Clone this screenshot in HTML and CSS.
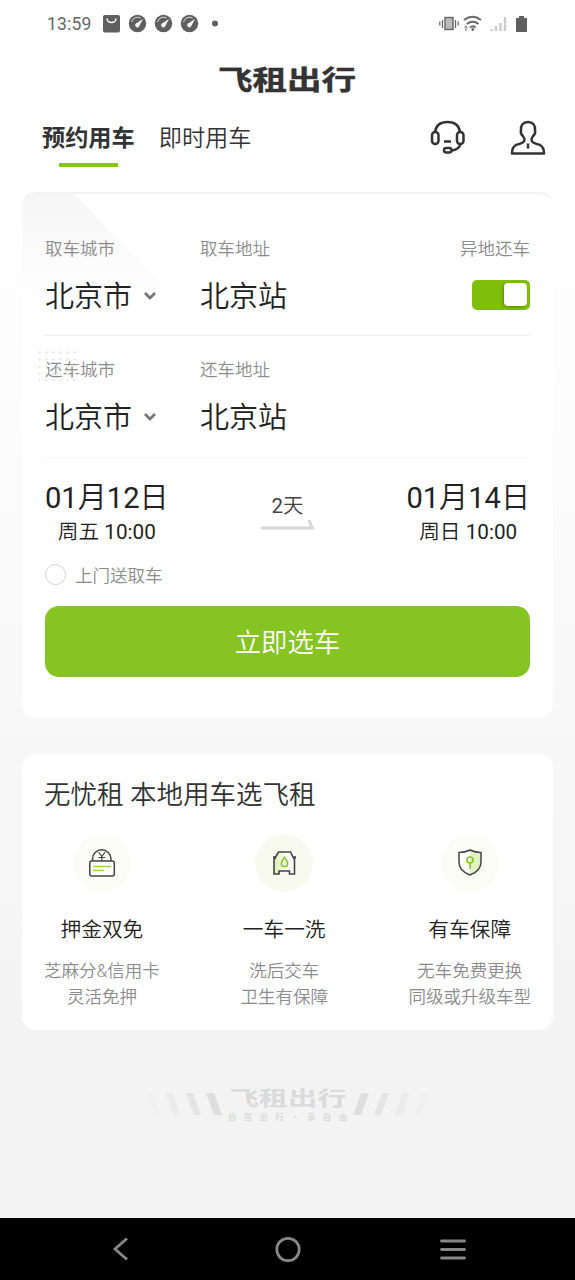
FILE: index.html
```html
<!DOCTYPE html>
<html lang="zh-CN">
<head>
<meta charset="utf-8">
<title>飞租出行</title>
<link rel="stylesheet" href="styles.css">
</head>
<body>
<div class="screen">
  <header class="status">
    <span class="clock">13:59</span>
    <svg class="status-left" width="120" height="20" viewBox="0 0 120 20">
      <rect x="0" y="1" width="17" height="17.500" rx="2" fill="#5f5f5f"/>
      <path d="M4 4.500a4.500 4 0 0 0 9 0" fill="none" stroke="#fff" stroke-width="1.500"/>
      <g id="gauge"><circle cx="34.500" cy="9.500" r="8.700" fill="#5f5f5f"/><path d="M28.500 8a6.200 6.200 0 0 1 9-4" fill="none" stroke="#ddd" stroke-width="1"/><path d="M40 5l-4 7.500a2 2 0 0 1-3.300-2.800z" fill="#fff"/></g>
      <use href="#gauge" x="26"/><use href="#gauge" x="52"/>
      <circle cx="112" cy="9.500" r="3" fill="#5f5f5f"/>
    </svg>
    <svg class="status-right" width="90" height="20" viewBox="0 0 90 20">
      <rect x="6" y="3.500" width="8" height="12" fill="#bbb" stroke="#666" stroke-width="1.400"/>
      <path d="M3.500 6v8M.8 7.500v4M16.500 6v8M19.200 7.500v4" stroke="#666" stroke-width="1.300"/>
      <path d="M25 6q8.500-6.500 17 0M27.800 10q6-4.500 11.800 0M31 13.500q3-2.500 5.500 0" fill="none" stroke="#666" stroke-width="2"/>
      <circle cx="33.800" cy="15.500" r="1.400" fill="#666"/><path d="M27 12v5M25.500 13.500l1.500-1.500 1.500 1.500" stroke="#777" fill="none"/>
      <path d="M52.500 15v2M57 12v5M61.500 9v8M66 3v14" stroke="#ccc" stroke-width="2.500"/>
      <path d="M77 4h3V2h5v2h3v14H77z" fill="#5f5f5f"/>
    </svg>
  </header>

  <h1 class="brand"><span class="wordmark">飞租出行</span></h1>

  <nav class="tabs">
    <span class="tab tab-active">预约用车</span>
    <span class="tab">即时用车</span>
    <div class="tools">
      <svg width="36" height="36" viewBox="0 0 36 36" fill="none" stroke="#333" stroke-width="2.500">
        <path d="M5 12C6 5 11 2 17.500 2S29 5 30 12"/>
        <rect x="2" y="12" width="6.500" height="12" rx="3.200"/><rect x="27" y="12" width="6.500" height="12" rx="3.200"/>
        <path d="M30.500 24c-1 4-4 6-9 6.500M14 21.500h7"/><rect x="14" y="28" width="7.500" height="4.500" rx="2.200"/>
      </svg>
      <svg width="36" height="36" viewBox="0 1 36 36" fill="none" stroke="#333" stroke-width="2.500" stroke-linejoin="round">
        <path d="M14.500 21c0-2-.8-2.700-2-4.500-1.800-1.500-2-2.800-1.500-5C10.500 6 13 3 18 3s7.500 3 7 8.500c.5 2.200.3 3.500-1.500 5-1.200 1.800-2 2.500-2 4.500 0 3 4.500 3.500 8.500 5 3 1.500 4 3.500 4 8.500h-32c0-5 1-7 4-8.500 4-1.500 8.500-2 8.500-5z"/><path d="M18 24.500v5"/>
      </svg>
    </div>
  </nav>

  <main class="card booking">
    <svg class="card-fold" width="160" height="110" viewBox="0 0 160 110">
      <defs><linearGradient id="fold" x1="0" y1="0" x2="0" y2="1"><stop offset="0" stop-color="#f6f6f6"/><stop offset="1" stop-color="#fff"/></linearGradient></defs>
      <path d="M0 0H52L160 110H0z" fill="url(#fold)"/>
    </svg>
    <section class="trip">
      <div class="field city"><span class="label">取车城市</span><span class="value">北京市<svg class="chevron" width="14" height="10" viewBox="0 0 14 10"><path d="M2 2l5 5 5-5" fill="none" stroke="#777" stroke-width="2.800"/></svg></span></div>
      <div class="field"><span class="label">取车地址</span><span class="value">北京站</span></div>
      <div class="field other"><span class="label">异地还车</span><span class="switch"><i class="knob"></i></span></div>
    </section>
    <section class="trip trip-return">
      <span class="dots"></span>
      <div class="field city"><span class="label">还车城市</span><span class="value">北京市<svg class="chevron" width="14" height="10" viewBox="0 0 14 10"><path d="M2 2l5 5 5-5" fill="none" stroke="#777" stroke-width="2.800"/></svg></span></div>
      <div class="field"><span class="label">还车地址</span><span class="value">北京站</span></div>
    </section>
    <section class="dates">
      <div class="date"><span class="day">01<b>月</b>12<b>日</b></span><span class="time"><b>周五</b> 10:00</span></div>
      <div class="span"><span>2<b>天</b></span><svg width="54" height="11" viewBox="0 0 54 11"><path d="M0 8h51l-3-8" fill="none" stroke="#d6d6d6" stroke-width="3"/></svg></div>
      <div class="date"><span class="day">01<b>月</b>14<b>日</b></span><span class="time"><b>周日</b> 10:00</span></div>
    </section>
    <div class="delivery"><i class="radio"></i><span>上门送取车</span></div>
    <button class="submit">立即选车</button>
  </main>

  <section class="card perks">
    <h2 class="perks-title">无忧租 本地用车选飞租</h2>
    <div class="perk-list">
      <div class="perk">
        <svg class="perk-icon" width="58" height="58" viewBox="0 0 58 58"><circle cx="29" cy="29" r="29" fill="#fbfcf6"/>
          <g fill="none" stroke="#444" stroke-width="1.500"><path d="M19.500 27v-2a9.200 9.200 0 0 1 18.500 0v2"/><rect x="16.800" y="27" width="24.500" height="15" rx="2" fill="#fff"/><path d="M25.500 18l3.300 4.500 3.300-4.500M28.800 22v5M25.500 23.500h6.600" stroke-width="1.200"/></g>
          <path d="M20 32.500h18M20 36.500h11" stroke="#9bd63c" stroke-width="1.400"/></svg>
        <strong>押金双免</strong><p>芝麻分&amp;信用卡<br>灵活免押</p>
      </div>
      <div class="perk">
        <svg class="perk-icon" width="58" height="58" viewBox="0 0 58 58"><defs><linearGradient id="wash"><stop offset="0" stop-color="#d8efb4"/><stop offset=".7" stop-color="#fff"/></linearGradient></defs><circle cx="29" cy="29" r="29" fill="#f8faef"/>
          <path d="M23.500 18h12l3 6 1 2v14h-5v-3H24v3h-5V26l1-2z" fill="url(#wash)" stroke="#444" stroke-width="1.600"/><path d="M18 23.500h3M38 23.500h3" stroke="#444" stroke-width="2.500"/>
          <path d="M29.500 23.500c-5 6-3.500 9 0 9s5-3 0-9z" fill="#efffd8" stroke="#86c51d" stroke-width="1.500"/></svg>
        <strong>一车一洗</strong><p>洗后交车<br>卫生有保障</p>
      </div>
      <div class="perk">
        <svg class="perk-icon" width="58" height="58" viewBox="0 0 58 58"><circle cx="29" cy="29" r="29" fill="#fbfcf6"/>
          <path d="M29 16q-6 2.500-11 2.500V28q0 9 11 13z" fill="#fff"/><path d="M29 16q6 2.500 11 2.500V28q0 9-11 13z" fill="#e0f4c2"/>
          <path d="M29 16q-5 2.500-11 2.500V28q0 9 11 13 11-4 11-13v-9.500q-6 0-11-2.500z" fill="none" stroke="#444" stroke-width="1.500"/><circle cx="29" cy="26" r="3" fill="none" stroke="#86c51d" stroke-width="1.600"/><path d="M29 29v6" stroke="#86c51d" stroke-width="1.600"/></svg>
        <strong>有车保障</strong><p>无车免费更换<br>同级或升级车型</p>
      </div>
    </div>
  </section>

  <footer class="slogan">
    <svg width="75" height="24" viewBox="0 0 75 24"><path d="M0 1h6l7 22H7z" fill="#f0f0f0"/><path d="M19 1h7l7 22h-7z" fill="#ebebeb"/><path d="M39 1h7l8 22h-7z" fill="#e4e4e4"/><path d="M59 1h8l8 22h-8z" fill="#dedede"/></svg>
    <div class="slogan-text"><span class="slogan-brand">飞租出行</span><span class="slogan-line"><span>自</span><span>驾</span><span>出</span><span>行</span><span>·</span><span>享</span><span>自</span><span>由</span></span></div>
    <svg width="75" height="24" viewBox="0 0 75 24"><path d="M8 1h8L8 23H0z" fill="#dedede"/><path d="M29 1h7l-8 22h-7z" fill="#e4e4e4"/><path d="M49 1h7l-7 22h-7z" fill="#ebebeb"/><path d="M69 1h6l-7 22h-6z" fill="#f0f0f0"/></svg>
  </footer>

  <nav class="system">
    <svg width="26" height="26" viewBox="0 0 26 26"><path d="M18 2.500L6 13l12 10.500" fill="none" stroke="#888" stroke-width="2.800"/></svg>
    <svg width="26" height="26" viewBox="0 0 26 26"><circle cx="13" cy="13.500" r="11.200" fill="none" stroke="#888" stroke-width="2.800"/></svg>
    <svg width="26" height="26" viewBox="0 0 26 26"><path d="M1.500 5h23M1.500 13.500h23M1.500 22h23" stroke="#888" stroke-width="2.800" stroke-linecap="round"/></svg>
  </nav>
</div>
</body>
</html>
```
FILE: styles.css
```css
* { box-sizing: border-box; }
body { margin: 0; }
.screen {
  width: 575px; height: 1280px; overflow: hidden;
  display: flex; flex-direction: column;
  font-family: Roboto, "Noto Sans CJK SC", sans-serif;
  color: #222;
  background: linear-gradient(#fff 180px, #f3f3f3 1080px);
}
svg { display: block; flex: none; }
b { font-weight: 350; }
.status { height: 48px; display: flex; align-items: center; padding: 0 46px 0 47px; }
.clock { width: 56px; font-size: 17.500px; color: #666; letter-spacing: .2px; }
.status-right { margin-left: auto; }
.brand { margin: 0; padding-right: 2px; height: 62px; display: flex; justify-content: center; align-items: center; }
.wordmark { font: 700 27px/34px "Noto Sans CJK SC", sans-serif; color: #333; -webkit-text-stroke: .4px #333; transform: scaleX(1.28); }
.tabs { height: 82px; padding: 10px 29px 0 42px; display: flex; align-items: flex-start; gap: 24px; }
.tab { font-size: 23.200px; line-height: 36px; color: #333; display: flex; flex-direction: column; align-items: center; font-weight: 350; }
.tab-active { font-weight: 700; }
.tab-active::after { content: ""; width: 59px; height: 4px; margin-top: 7px; background: #86c51d; }
.tools { margin-left: auto; display: flex; gap: 44px; }
.card { margin: 0 22px; background: #fff; border-radius: 14px; position: relative; }
.booking { height: 526px; padding: 0 23px; border-top: 2px solid #f2f2f2; display: flex; flex-direction: column; overflow: hidden; flex: none; }
.card-fold { position: absolute; left: 0; top: 0; }
.trip { height: 142px; padding-top: 43px; border-bottom: 1px solid #eee; display: flex; position: relative; flex: none; }
.trip-return { height: 122px; padding-top: 22px; border-color: #f6f6f6; }
.field { display: flex; flex-direction: column; }
.city { width: 155px; }
.label { font-size: 17.500px; line-height: 24px; color: #8c8c8c; font-weight: 350; }
.value { font-size: 29px; line-height: 40px; margin-top: 16px; display: flex; align-items: center; font-weight: 350; }
.chevron { margin: -2px 0 0 11px; }
.other { margin-left: auto; align-items: flex-end; }
.switch { width: 58px; height: 30px; margin-top: 19px; padding: 3px; background: #7fbf0c; border-radius: 5px; display: flex; justify-content: flex-end; }
.knob { width: 23px; height: 23px; background: #fff; border-radius: 4px; box-shadow: -1px 1px 3px rgba(0,0,0,.3); }
.dots { position: absolute; left: -9px; top: 13px; width: 42px; height: 32px; background: radial-gradient(circle, #ededed 1px, transparent 1.500px) 0 0 / 7px 7px; }
.dates { display: flex; justify-content: space-between; padding-top: 21px; }
.date { display: flex; flex-direction: column; align-items: center; }
.day { font-size: 29.100px; line-height: 38px; }
.time { font-size: 20.700px; line-height: 30px; }
.span { display: flex; flex-direction: column; align-items: center; font-size: 20.500px; line-height: 28px; color: #444; padding-top: 13px; }
.delivery { display: flex; align-items: center; gap: 9px; margin-top: 15px; height: 25px; font-size: 17.500px; color: #8c8c8c; font-weight: 350; }
.radio { width: 21px; height: 21px; border: 1px solid #d2d2d2; border-radius: 50%; background: #fff; }
.submit { margin-top: 19px; height: 71px; border: 0; border-radius: 14px; background: #86c423; color: #fff; font: 350 26.400px/40px Roboto, "Noto Sans CJK SC", sans-serif; padding: 2px 0 0; }
.perks { height: 276px; margin-top: 36px; padding: 22px 22px 0; flex: none; }
.perks-title { margin: 0; font-size: 26.500px; line-height: 38px; font-weight: 350; color: #333; }
.perk-list { display: flex; justify-content: space-between; margin-top: 20px; }
.perk { display: flex; flex-direction: column; align-items: center; }
.perk strong { font-size: 20.700px; line-height: 30px; font-weight: 350; margin-top: 23px; }
.perk p { margin: 13px 0 0; font-size: 17.500px; line-height: 26px; color: #8c8c8c; text-align: center; font-weight: 350; }
.slogan { display: flex; justify-content: center; align-items: center; gap: 6px; margin-top: 57px; height: 34px; }
.slogan-text { width: 119px; display: flex; flex-direction: column; align-items: center; color: #dadada; font-family: "Noto Sans CJK SC", sans-serif; }
.slogan-brand { font-size: 20px; line-height: 20px; font-weight: 700; transform: scaleX(1.46); }
.slogan-line { width: 119px; margin-top: 3px; display: flex; justify-content: space-between; font-size: 8.500px; line-height: 10px; font-weight: 700; }
.system { height: 62px; margin-top: auto; background: #000; padding: 0 109px; display: flex; align-items: center; justify-content: space-between; }
```
